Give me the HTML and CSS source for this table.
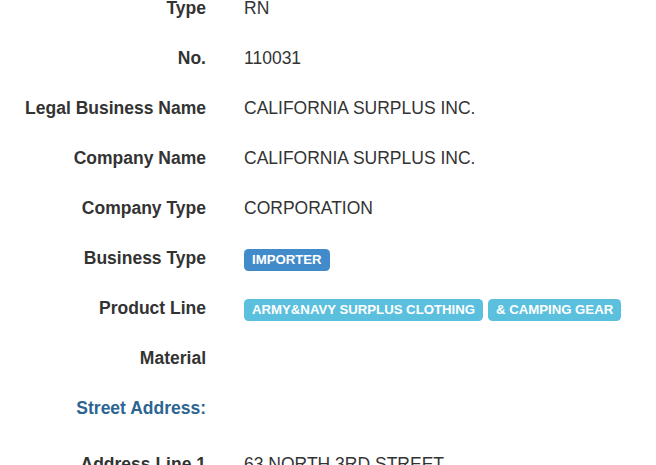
FILE: index.html
```html
<!DOCTYPE html>
<html>
<head>
<meta charset="utf-8">
<link rel="stylesheet" href="styles.css">
</head>
<body>
<dl class="details">
  <dt>Type</dt><dd>RN</dd>
  <dt>No.</dt><dd>110031</dd>
  <dt>Legal Business Name</dt><dd>CALIFORNIA SURPLUS INC.</dd>
  <dt>Company Name</dt><dd>CALIFORNIA SURPLUS INC.</dd>
  <dt>Company Type</dt><dd>CORPORATION</dd>
  <dt>Business Type</dt><dd><span class="label label-primary">IMPORTER</span></dd>
  <dt>Product Line</dt><dd><span class="label label-info">ARMY&amp;NAVY SURPLUS CLOTHING</span> <span class="label label-info">&amp; CAMPING GEAR</span></dd>
  <dt>Material</dt><dd></dd>
  <dt class="section">Street Address:</dt><dd class="section"></dd>
  <dt>Address Line 1</dt><dd>63 NORTH 3RD STREET</dd>
</dl>
</body>
</html>
```

FILE: styles.css
```css
html, body {
  margin: 0;
  padding: 0;
  background: #fff;
}
body {
  font-family: "Liberation Sans", Arial, sans-serif;
  font-size: 17.5px;
  color: #333;
  overflow: hidden;
}
.details {
  display: grid;
  grid-template-columns: 206px 1fr;
  grid-template-rows: repeat(8, 50px) 56px 50px;
  column-gap: 38px;
  margin: -17px 0 0 0;
}
.details dt,
.details dd {
  margin: 0;
  display: flex;
  align-items: center;
  line-height: 25px;
}
.details dt {
  font-weight: bold;
  justify-content: flex-end;
  text-align: right;
  color: #333;
}
.details .section {
  align-items: flex-start;
  padding-top: 12.5px;
}
.details dt.section {
  color: #2d6592;
}
.details dd {
  color: #333;
}
.label {
  display: inline-block;
  font-size: 13.2px;
  font-weight: bold;
  line-height: 1;
  color: #fff;
  padding: 3.5px 8px 5px;
  margin-top: 4px;
  border-radius: 4.5px;
  white-space: nowrap;
}
.label + .label {
  margin-left: 5px;
}
.label-primary {
  background: #428bca;
}
.label-info {
  background: #5bc0de;
}
```
